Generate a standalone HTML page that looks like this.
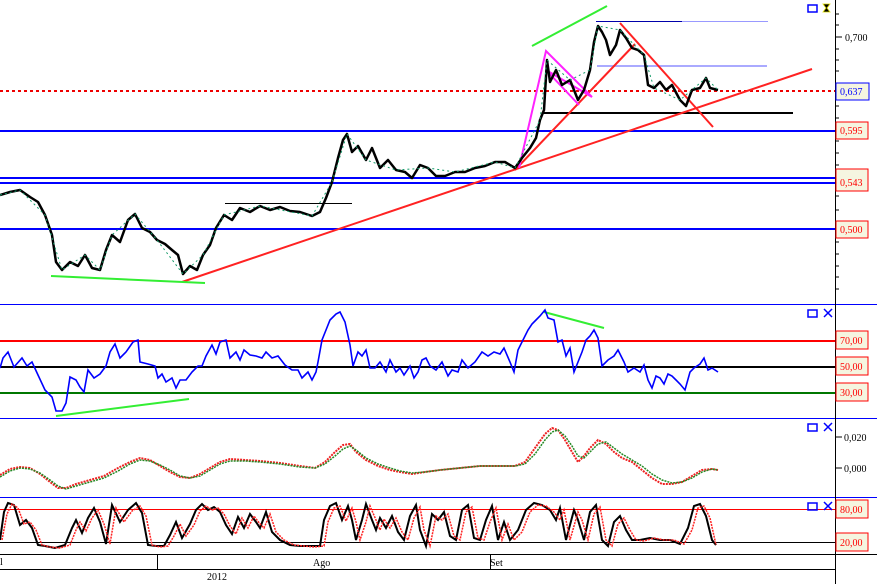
<!DOCTYPE html>
<html><head><style>html,body{margin:0;padding:0;background:#fff;width:877px;height:584px;overflow:hidden}svg{display:block}text{font-family:"Liberation Serif",serif;font-size:10px}</style></head><body>
<svg width="877" height="584" viewBox="0 0 877 584">
<rect width="877" height="584" fill="#fff"/>
<g shape-rendering="crispEdges">
<line x1="0" y1="304.5" x2="877" y2="304.5" stroke="#00f"/>
<line x1="0" y1="418.5" x2="877" y2="418.5" stroke="#00f"/>
<line x1="0" y1="497.5" x2="877" y2="497.5" stroke="#00f"/>
<line x1="0" y1="131" x2="835" y2="131" stroke="#00f" stroke-width="2"/>
<line x1="0" y1="178" x2="835" y2="178" stroke="#00f" stroke-width="2"/>
<line x1="0" y1="183" x2="835" y2="183" stroke="#00f" stroke-width="2"/>
<line x1="0" y1="229" x2="835" y2="229" stroke="#00f" stroke-width="2"/>
<line x1="0" y1="91" x2="835" y2="91" stroke="#e00" stroke-width="2" stroke-dasharray="3,3"/>
<line x1="596" y1="21.5" x2="768" y2="21.5" stroke="#99f"/>
<line x1="596" y1="21.5" x2="682" y2="21.5" stroke="#00a"/>
<line x1="597" y1="66" x2="767" y2="66" stroke="#aaf" stroke-width="2"/>
<line x1="543" y1="113" x2="793" y2="113" stroke="#000" stroke-width="2"/>
<line x1="225" y1="203.5" x2="352" y2="203.5" stroke="#000"/>
</g>
<line x1="182" y1="282" x2="812" y2="69" stroke="#f22" stroke-width="2"/>
<line x1="515" y1="170" x2="635" y2="44" stroke="#f22" stroke-width="2"/>
<line x1="620" y1="23" x2="713" y2="127" stroke="#f22" stroke-width="2"/>
<line x1="532" y1="46" x2="607" y2="6" stroke="#3e3" stroke-width="2"/>
<line x1="51" y1="276" x2="205" y2="283" stroke="#3e3" stroke-width="2"/>
<polyline points="519,168 546,51 592,97 546,70 579,105" fill="none" stroke="#f2f" stroke-width="2"/>
<polyline points="0,195 10,192 20,190 30,197 38,202 45,215 52,235 56,262 62,270 70,262 78,266 85,255 92,268 100,270 106,250 112,235 120,242 128,220 135,214 142,228 150,232 157,240 165,244 172,250 178,255 183,274 190,266 197,270 203,255 210,245 216,228 224,215 232,220 240,208 250,212 260,206 270,210 280,207 290,211 300,212 312,216 320,212 326,198 332,182 338,158 343,140 347,134 352,152 358,146 366,160 372,148 380,168 388,160 396,170 405,172 412,178 420,165 428,168 436,176 445,176 455,172 465,172 475,168 485,166 495,162 505,162 515,168 522,158 530,148 536,138 540,120 544,110 547,60 550,82 556,70 562,85 570,80 578,100 584,90 590,70 594,42 598,26 602,32 606,40 610,55 616,45 620,30 626,38 632,48 638,50 644,55 648,85 654,88 660,82 666,90 672,85 680,100 686,106 692,90 700,88 706,78 710,88 718,90" fill="none" stroke="#000" stroke-width="2.5" stroke-linejoin="round"/>
<polyline points="0,195 20,190 45,215 62,270 85,255 100,270 112,235 135,214 157,240 183,274 203,255 224,215 260,206 312,216 332,182 347,134 366,160 396,170 428,168 455,172 495,162 515,168 540,120 547,60 570,80 590,70 598,26 620,30 644,55 654,88 680,100 706,78 718,90" fill="none" stroke="#196" stroke-width="1" stroke-dasharray="2,3"/>
<g shape-rendering="crispEdges">
<line x1="0" y1="341" x2="835" y2="341" stroke="#f00" stroke-width="2"/>
<line x1="0" y1="367" x2="835" y2="367" stroke="#000" stroke-width="2"/>
<line x1="0" y1="393" x2="835" y2="393" stroke="#070" stroke-width="2"/>
</g>
<line x1="56" y1="416" x2="189" y2="399" stroke="#3e3" stroke-width="2"/>
<line x1="544" y1="312" x2="604" y2="328" stroke="#3e3" stroke-width="2"/>
<polyline points="0,368 3,358 8,352 12,362 14,367 22,358 27,366 32,362 38,375 45,390 52,397 56,411 62,411 66,403 70,377 76,380 80,387 84,392 88,370 94,378 100,374 106,366 110,352 115,344 120,358 126,352 133,342 138,340 140,362 148,364 155,366 158,378 162,374 166,382 172,378 176,388 180,380 186,380 192,372 198,366 202,366 206,356 212,345 216,354 220,342 226,340 230,358 236,352 240,360 244,350 250,355 256,356 262,358 266,352 272,358 278,356 285,365 292,370 298,370 302,378 308,372 312,380 316,372 318,362 322,340 326,330 330,320 336,314 340,312 345,322 350,345 353,366 358,352 362,356 366,350 370,368 375,368 380,362 386,372 390,360 396,372 400,368 404,375 410,366 414,378 418,372 422,360 426,358 430,366 436,370 442,362 448,376 452,370 458,372 462,360 468,368 475,362 482,352 488,356 494,352 500,354 504,348 510,362 514,372 518,350 524,338 528,330 532,324 536,320 540,316 545,310 548,318 554,320 558,342 562,340 566,356 570,348 574,372 578,362 582,352 586,340 590,336 594,330 598,338 602,366 608,360 614,356 618,350 624,362 628,372 634,368 640,372 644,365 648,380 652,388 656,376 660,378 664,384 668,374 672,376 676,380 680,384 685,390 690,372 694,368 700,364 704,358 708,370 712,368 718,372" fill="none" stroke="#00f" stroke-width="1.6"/>
<polyline points="0,475 10,469 20,467 30,468 40,474 50,482 58,488 66,488 76,484 90,480 104,476 118,468 130,462 140,458 150,460 160,466 170,472 180,477 190,478 200,474 210,468 220,462 230,459 245,460 260,461 280,463 300,466 315,468 325,462 335,452 343,445 350,444 356,452 366,460 378,466 390,470 400,472 412,474 425,472 440,470 460,468 480,466 500,466 515,466 525,462 535,448 545,434 552,428 558,430 565,440 572,452 578,462 584,456 590,448 598,440 606,444 614,452 622,458 632,462 642,470 652,478 662,484 672,484 682,482 692,476 702,470 712,469 718,470" fill="none" stroke="#e22" stroke-width="2" stroke-dasharray="2,1"/>
<polyline points="0,477 10,471 20,468 30,469 40,473 50,480 58,486 66,489 76,486 90,482 104,478 118,471 130,464 140,460 150,461 160,465 170,470 180,476 190,478 200,476 210,470 220,464 230,461 245,461 260,462 280,464 300,467 315,468 325,464 335,456 343,449 350,446 356,450 366,458 378,464 390,468 400,471 412,473 425,472 440,470 460,468 480,466 500,466 515,466 525,464 535,454 545,440 552,432 558,430 565,436 572,446 578,456 584,458 590,452 598,444 606,442 614,448 622,454 632,460 642,466 652,474 662,480 672,483 682,482 692,478 702,472 712,469 718,470" fill="none" stroke="#282" stroke-width="1.5" stroke-dasharray="2,1"/>
<g shape-rendering="crispEdges">
<line x1="0" y1="509.5" x2="835" y2="509.5" stroke="#f00"/>
<line x1="0" y1="542.5" x2="835" y2="542.5" stroke="#000"/>
</g>
<polyline points="0,540 4,512 8,503 14,505 20,525 26,520 32,528 38,545 45,546 55,548 65,545 72,528 76,520 82,533 88,518 94,508 100,522 106,544 112,505 120,522 128,510 136,503 142,513 148,545 156,546 164,546 170,535 176,522 182,538 190,524 196,510 202,504 208,510 214,507 220,512 226,525 232,534 238,517 244,528 250,514 256,522 260,528 266,512 272,532 280,540 290,545 300,546 310,546 320,546 324,520 330,506 336,503 342,520 348,506 352,520 356,540 362,520 366,504 372,520 376,530 380,518 386,528 392,516 398,532 404,540 410,516 416,505 420,530 426,546 432,514 438,520 444,512 450,536 456,540 462,510 468,505 474,538 480,540 486,520 492,506 498,540 504,522 510,540 518,530 526,510 534,503 542,505 550,510 556,520 560,508 566,540 574,510 578,520 584,540 590,512 596,505 602,540 608,546 614,522 620,516 626,530 632,540 640,540 650,538 660,540 670,540 680,544 688,528 694,506 700,504 706,516 712,540 716,545" fill="none" stroke="#000" stroke-width="2"/>
<polyline points="2,540 7,514 12,504 18,508 24,524 30,522 36,530 42,545 50,547 60,548 70,545 76,530 80,522 86,531 92,518 98,510 104,524 110,544 116,508 124,522 132,511 140,506 146,516 152,545 160,547 168,546 174,536 180,524 186,536 194,525 200,511 206,506 212,510 218,508 224,514 230,526 236,534 242,518 248,528 254,516 260,524 264,528 270,514 276,532 284,540 294,545 304,546 314,547 324,546 328,522 334,508 340,506 346,521 352,508 356,522 360,540 366,522 370,506 376,520 380,530 384,519 390,528 396,518 402,532 408,540 414,518 420,507 424,530 430,546 436,516 442,520 448,514 454,536 460,540 466,512 472,507 478,538 484,540 490,522 496,508 502,540 508,524 514,540 522,532 530,512 538,505 546,506 554,512 560,520 564,510 570,540 578,512 582,520 588,540 594,514 600,507 606,540 612,546 618,524 624,518 630,530 636,540 644,541 654,538 664,540 674,540 684,544 692,530 698,508 704,506 710,518 716,545" fill="none" stroke="#f22" stroke-width="1.5" stroke-dasharray="2,1"/>
<g shape-rendering="crispEdges" stroke="#000">
<line x1="0" y1="554.5" x2="877" y2="554.5"/>
<line x1="0" y1="569.5" x2="835" y2="569.5"/>
<line x1="157.5" y1="554" x2="157.5" y2="569"/>
<line x1="490.5" y1="554" x2="490.5" y2="569"/>
<line x1="835.5" y1="0" x2="835.5" y2="584"/>
<line x1="835" y1="14" x2="839" y2="14"/><line x1="835" y1="25" x2="839" y2="25"/><line x1="835" y1="37" x2="842" y2="37"/><line x1="835" y1="49" x2="839" y2="49"/><line x1="835" y1="60" x2="839" y2="60"/><line x1="835" y1="71" x2="839" y2="71"/><line x1="835" y1="83" x2="839" y2="83"/><line x1="835" y1="106" x2="839" y2="106"/><line x1="835" y1="118" x2="839" y2="118"/><line x1="835" y1="141" x2="839" y2="141"/><line x1="835" y1="153" x2="839" y2="153"/><line x1="835" y1="165" x2="839" y2="165"/><line x1="835" y1="196" x2="839" y2="196"/><line x1="835" y1="210" x2="839" y2="210"/><line x1="835" y1="242" x2="839" y2="242"/><line x1="835" y1="254" x2="839" y2="254"/><line x1="835" y1="266" x2="839" y2="266"/><line x1="835" y1="277" x2="839" y2="277"/><line x1="835" y1="289" x2="839" y2="289"/>
<line x1="835" y1="437" x2="842" y2="437"/><line x1="835" y1="468" x2="842" y2="468"/>
</g>
<text x="0" y="565">l</text>
<text x="313" y="566">Ago</text>
<text x="490" y="566">Set</text>
<text x="207" y="580">2012</text>
<g font-size="10">
<text x="845" y="41" fill="#000">0,700</text>
<rect x="836" y="83" width="33" height="17" fill="#f5f5e0" stroke="#00f"/><text x="840" y="95" fill="#00f">0,637</text>
<rect x="836" y="122" width="32" height="17" fill="#f5f5e0" stroke="#f00"/><text x="840" y="134" fill="#f00">0,595</text>
<rect x="836" y="169" width="32" height="22" fill="#f5f5e0" stroke="#f00"/><text x="840" y="186" fill="#f00">0,543</text>
<rect x="836" y="221" width="32" height="17" fill="#f5f5e0" stroke="#f00"/><text x="840" y="233" fill="#f00">0,500</text>
<rect x="836" y="331" width="32" height="18" fill="#f5f5e0" stroke="#f00"/><text x="840" y="344" fill="#f00">70,00</text>
<rect x="836" y="357" width="32" height="18" fill="#f5f5e0" stroke="#f00"/><text x="840" y="370" fill="#f00">50,00</text>
<rect x="836" y="383" width="32" height="18" fill="#f5f5e0" stroke="#f00"/><text x="840" y="396" fill="#f00">30,00</text>
<text x="844" y="441" fill="#000">0,020</text>
<text x="844" y="472" fill="#000">0,000</text>
<rect x="836" y="500" width="32" height="18" fill="#f5f5e0" stroke="#f00"/><text x="840" y="513" fill="#f00">80,00</text>
<rect x="836" y="533" width="32" height="18" fill="#f5f5e0" stroke="#f00"/><text x="840" y="546" fill="#f00">20,00</text>
</g>
<g fill="none" stroke="#00f" stroke-width="1.5">
<rect x="808" y="5" width="9" height="7"/>
<rect x="808" y="310" width="9" height="7"/><path d="M824,309 l8,8 M832,309 l-8,8"/>
<rect x="808" y="424" width="9" height="7"/><path d="M824,423 l8,8 M832,423 l-8,8"/>
<rect x="808" y="503" width="9" height="7"/><path d="M824,502 l8,8 M832,502 l-8,8"/>
</g>
<path d="M823,4 h7 l-3,4 l3,4 h-7 l3,-4 z" fill="#000" stroke="#dd0" stroke-width="0.8"/>
</svg>
</body></html>
